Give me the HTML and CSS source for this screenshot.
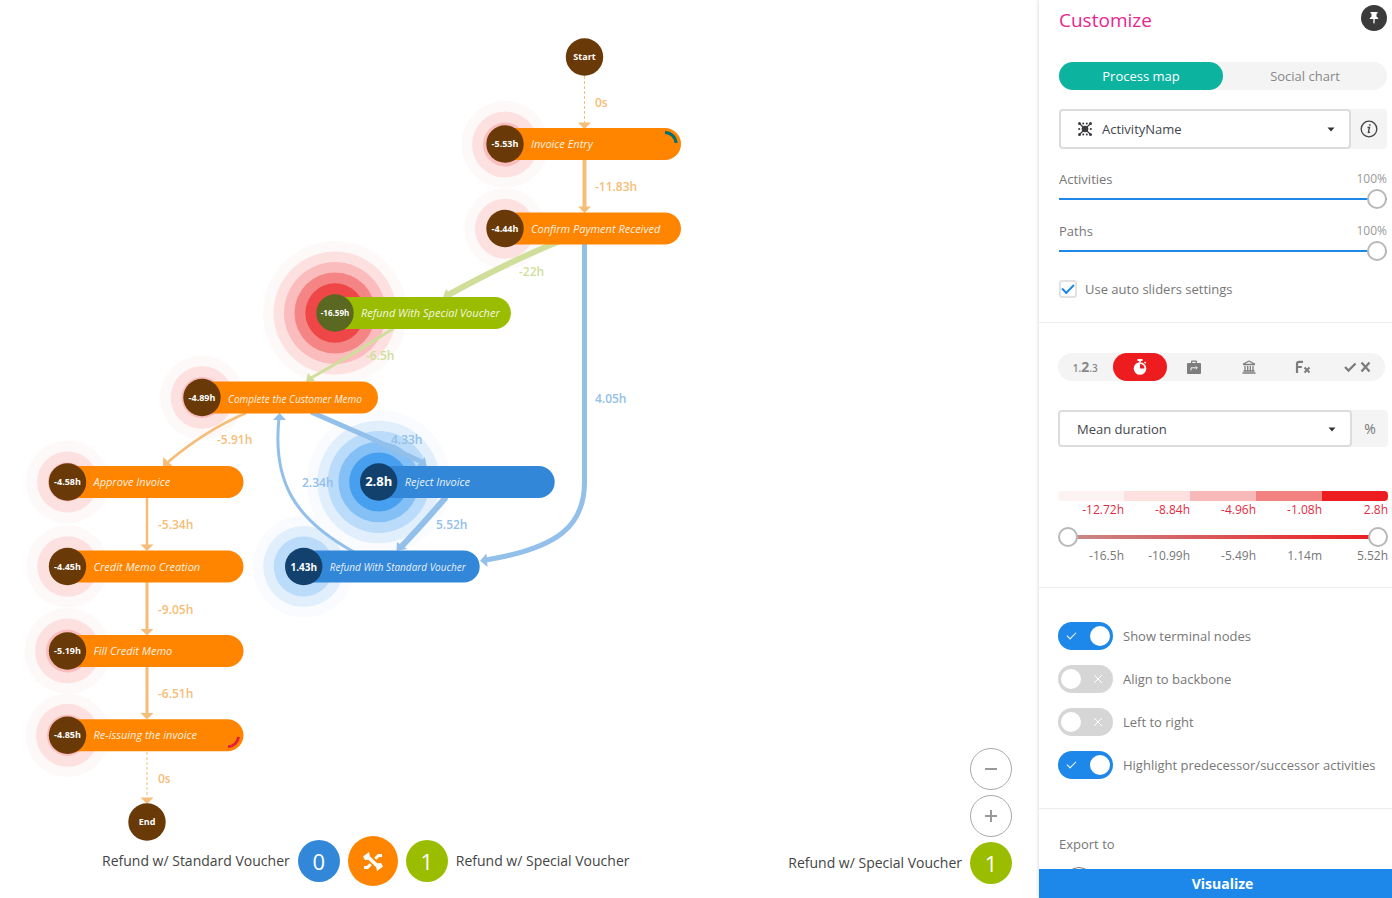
FILE: index.html
```html
<!DOCTYPE html>
<html lang="en">
<head>
<meta charset="utf-8">
<title>Process map</title>
<link rel="stylesheet" href="styles.css">
</head>
<body>
<div class="app">
<main class="stage">
  <svg class="graph" width="700" height="850" viewBox="0 0 700 850" role="img" aria-label="Process map">
    <g class="halos-red">
      <circle class="h1" cx="505" cy="144.5" r="43.5"/><circle class="h2" cx="505" cy="144.5" r="33"/><circle class="h3" cx="505" cy="144.5" r="22"/>
      <circle class="h1" cx="505" cy="228.7" r="40.5"/><circle class="h2" cx="505" cy="228.7" r="30"/>
      <circle class="h1" cx="335" cy="313" r="72"/><circle class="h2" cx="335" cy="313" r="61.5"/><circle class="h3" cx="335" cy="313" r="51"/><circle class="h4" cx="335" cy="313" r="40.5"/><circle class="h5" cx="335" cy="313" r="29.7"/>
      <circle class="h1" cx="202" cy="397.5" r="42"/><circle class="h2" cx="202" cy="397.5" r="31.3"/><circle class="h3" cx="202" cy="397.5" r="20.5"/>
      <circle class="h1" cx="67.5" cy="482" r="41.5"/><circle class="h2" cx="67.5" cy="482" r="30.5"/><circle class="h3" cx="67.5" cy="482" r="19.5"/>
      <circle class="h1" cx="67.5" cy="566.5" r="41"/><circle class="h2" cx="67.5" cy="566.5" r="30.3"/>
      <circle class="h1" cx="67.5" cy="651" r="43"/><circle class="h2" cx="67.5" cy="651" r="32.5"/><circle class="h3" cx="67.5" cy="651" r="21.5"/>
      <circle class="h1" cx="67.5" cy="735.3" r="42"/><circle class="h2" cx="67.5" cy="735.3" r="31.5"/><circle class="h3" cx="67.5" cy="735.3" r="20.5"/>
    </g>
    <g class="halos-blue">
      <circle class="h1" cx="378.7" cy="482" r="72"/><circle class="h1" cx="303.7" cy="566.5" r="51"/>
      <circle class="h2" cx="378.7" cy="482" r="61.3"/><circle class="h3" cx="378.7" cy="482" r="51"/><circle class="h4" cx="378.7" cy="482" r="40.3"/><circle class="h5" cx="378.7" cy="482" r="29.5"/>
      <circle class="h2" cx="303.7" cy="566.5" r="40.5"/><circle class="h3" cx="303.7" cy="566.5" r="30"/>
    </g>

    <g class="edge-orange">
      <path class="dashed" d="M584.5 76V123"/><path class="head" d="M578 122.5h13l-6.500 6.500z"/>
      <path class="w4" d="M584.500 160V208"/><path class="head" d="M578 206.500h13l-6.500 6.500z"/>
      <path class="w2" d="M246 413Q206 430 168 462"/><path class="head" d="M163.300 457L163 467L172.500 466z"/>
      <path class="w2" d="M147 497V546"/><path class="head" d="M140.500 544.500h13l-6.500 6.500z"/>
      <path class="w3" d="M147 582V630"/><path class="head" d="M140.500 629h13l-6.500 6.500z"/>
      <path class="w3" d="M147 667V715"/><path class="head" d="M140.500 713h13l-6.500 6.500z"/>
      <path class="dashed" d="M147 752V797"/><path class="head" d="M140.500 797.500h13l-6.500 6.500z"/>
    </g>
    <g class="edge-green">
      <path class="w6" d="M560 241Q508 262 448 295"/><path class="head" d="M446 289L442 300L455 300z"/>
      <path class="w3" d="M394 328Q352 355 311 378"/><path class="head" d="M308 373L306 382L315 381z"/>
    </g>
    <g class="edge-blue">
      <path class="w5" d="M584.500 244V482C584.500 526 558 548 486 560"/><path class="head" d="M486.500 553.500L480 560.700L487.500 567z"/>
      <path class="w5" d="M311 412Q368 436 424 463"/><path class="head" d="M425 457L426.500 467L416 467z"/>
      <path class="w6" d="M446 497Q423 524 402 546"/><path class="head" d="M397 542L396.500 551L407 549z"/>
      <path class="w3" d="M354 552C296 520 272 483 279 418"/><path class="head" d="M273 420h13l-6.500 -7z"/>
    </g>
    <g class="edge-label">
      <text class="t-orange" x="595" y="107">0s</text>
      <text class="t-orange" x="595" y="191">-11.83h</text>
      <text class="t-green" x="519" y="276">-22h</text>
      <text class="t-green" x="366" y="360">-6.5h</text>
      <text class="t-blue" x="595" y="403">4.05h</text>
      <text class="t-orange" x="217" y="444">-5.91h</text>
      <text class="t-blue" x="391" y="444">4.33h</text>
      <text class="t-blue" x="302" y="487">2.34h</text>
      <text class="t-blue" x="436" y="529">5.52h</text>
      <text class="t-orange" x="158" y="529">-5.34h</text>
      <text class="t-orange" x="158" y="614">-9.05h</text>
      <text class="t-orange" x="158" y="698">-6.51h</text>
      <text class="t-orange" x="158" y="783">0s</text>
    </g>

    <g class="node orange" transform="translate(505 144)"><rect x="-16" y="-16" width="192" height="32" rx="16"/><circle r="18.700"/><text class="name" x="26" y="4">Invoice Entry</text><text class="value" y="3">-5.53h</text><path class="arc-start" d="M160 -11.500A11 11 0 0 1 171 -1"/></g>
    <g class="node orange" transform="translate(505 228.500)"><rect x="-16" y="-16" width="192" height="32" rx="16"/><circle r="18.700"/><text class="name" x="26" y="4">Confirm Payment Received</text><text class="value" y="3">-4.44h</text></g>
    <g class="node green" transform="translate(335 313)"><rect x="-16" y="-16" width="192" height="32" rx="16"/><circle r="18.700"/><text class="name" x="26" y="4">Refund With Special Voucher</text><text class="value small" y="3">-16.59h</text></g>
    <g class="node orange" transform="translate(202 397.500)"><rect x="-16" y="-16" width="192" height="32" rx="16"/><circle r="18.700"/><text class="name tight" x="26" y="5">Complete the Customer Memo</text><text class="value" y="3">-4.89h</text></g>
    <g class="node blue" transform="translate(378.700 482)"><rect x="-16" y="-16" width="192" height="32" rx="16"/><circle r="18.700"/><text class="name" x="26" y="4">Reject Invoice</text><text class="value big" y="4">2.8h</text></g>
    <g class="node blue" transform="translate(303.700 566.500)"><rect x="-16" y="-16" width="192" height="32" rx="16"/><circle r="18.700"/><text class="name tight" x="26" y="4">Refund With Standard Voucher</text><text class="value mid" y="4">1.43h</text></g>
    <g class="node orange" transform="translate(67.500 482)"><rect x="-16" y="-16" width="192" height="32" rx="16"/><circle r="18.700"/><text class="name" x="26" y="4">Approve Invoice</text><text class="value" y="3">-4.58h</text></g>
    <g class="node orange" transform="translate(67.500 566.500)"><rect x="-16" y="-16" width="192" height="32" rx="16"/><circle r="18.700"/><text class="name" x="26" y="4">Credit Memo Creation</text><text class="value" y="3">-4.45h</text></g>
    <g class="node orange" transform="translate(67.500 651)"><rect x="-16" y="-16" width="192" height="32" rx="16"/><circle r="18.700"/><text class="name" x="26" y="4">Fill Credit Memo</text><text class="value" y="3">-5.19h</text></g>
    <g class="node orange" transform="translate(67.500 735.300)"><rect x="-16" y="-16" width="192" height="32" rx="16"/><circle r="18.700"/><text class="name" x="26" y="4">Re-issuing the invoice</text><text class="value" y="3">-4.85h</text><path class="arc-end" d="M171 1.500A11 11 0 0 1 160.500 11.500"/></g>
    <g class="node orange" transform="translate(584.500 57)"><circle r="18.700"/><text class="value" y="3">Start</text></g>
    <g class="node orange" transform="translate(147 822)"><circle r="18.700"/><text class="value" y="3">End</text></g>
  </svg>

  <div class="overlay">
    <div class="legend">
      <span>Refund w/ Standard Voucher</span>
      <button class="bubble bubble-blue" type="button">0</button>
      <button class="bubble bubble-swap" type="button" aria-label="Compare">
        <svg width="20" height="19" viewBox="0 0 20 19" fill="none" stroke="#fff" stroke-width="3"><path stroke-width="3.600" d="M4 4L16 15.500"/><path d="M19 3.500H15.500L12.300 6.800M1 15.500H4.500L7.700 12.200"/><path fill="#fff" stroke="none" d="M0 4.500L6 0l1.500 7.500L2 8zM20 14.500L14 19l-1.500-7.500L18 11z"/></svg>
      </button>
      <button class="bubble bubble-green" type="button">1</button>
      <span>Refund w/ Special Voucher</span>
    </div>
    <div class="zoom">
      <button class="round" type="button" aria-label="Zoom out"><svg width="14" height="14" viewBox="0 0 14 14"><path d="M1 7h12"/></svg></button>
      <button class="round" type="button" aria-label="Zoom in"><svg width="14" height="14" viewBox="0 0 14 14"><path d="M1 7h12M7 1v12"/></svg></button>
      <div class="legend"><span>Refund w/ Special Voucher</span><button class="bubble bubble-green" type="button">1</button></div>
    </div>
  </div>
</main>

<aside class="panel">
  <div class="panel-body">
    <section class="block block-top">
      <header class="panel-head">
        <h1>Customize</h1>
        <button class="pin" type="button" aria-label="Pin panel"><svg width="10" height="14" viewBox="0 0 10 14" fill="#fff"><path d="M1.500 1h7v1.500h-1v3.300C8.800 6.300 9.300 7 9.300 8H.7c0-1 .5-1.700 1.800-2.200V2.500h-1zM4.300 8h1.400v3.500L5 13l-.7-1.500z"/></svg></button>
      </header>
      <div class="tabs">
        <button class="tab tab-on" type="button">Process map</button>
        <button class="tab" type="button">Social chart</button>
      </div>
      <div class="field">
        <div class="select">
          <svg class="select-icon" width="14" height="14" viewBox="0 0 14 14" fill="#3a3a40"><path d="M2 2l10 10M12 2L2 12" stroke="#3a3a40" stroke-width="1.200"/><circle cx="7" cy="7" r="3.300"/><circle cx="1.500" cy="1.500" r="1.500"/><circle cx="12.500" cy="1.500" r="1.500"/><circle cx="1.500" cy="12.500" r="1.500"/><circle cx="12.500" cy="12.500" r="1.500"/><circle cx="5.200" cy="1.500" r="1"/><circle cx="8.800" cy="1.500" r="1"/><circle cx="5.200" cy="12.500" r="1"/><circle cx="8.800" cy="12.500" r="1"/><circle cx="1.200" cy="7" r="1.100"/><circle cx="12.800" cy="7" r="1.100"/></svg>
          <select class="with-icon" aria-label="Attribute"><option>ActivityName</option></select>
          <svg class="caret" width="8" height="5" viewBox="0 0 8 5"><path d="M.5.500h7L4 4.500z"/></svg>
        </div>
        <button class="addon" type="button" aria-label="Information"><svg width="18" height="18" viewBox="0 0 18 18" fill="none" stroke="#444" stroke-width="1.300"><circle cx="9" cy="9" r="7.800"/><path d="M7.500 7.500h2L8.300 12.300q.6.500 1.800-.4" /><circle cx="9.800" cy="5" r=".6" fill="#444" stroke-width=".6"/></svg></button>
      </div>
      <div class="slider">
        <label for="activities">Activities</label><output for="activities">100%</output>
        <input id="activities" type="range" min="0" max="100" value="100">
      </div>
      <div class="slider">
        <label for="paths">Paths</label><output for="paths">100%</output>
        <input id="paths" type="range" min="0" max="100" value="100">
      </div>
      <label class="check"><input type="checkbox" checked>Use auto sliders settings</label>
    </section>

    <section class="block block-metric">
      <div class="icons">
        <button class="metric num" type="button" aria-label="Frequency"><small>1.</small>2<small>.3</small></button>
        <button class="metric metric-on" type="button" aria-label="Duration"><svg width="14" height="16" viewBox="0 0 14 16"><path fill="#fff" d="M4.500 0h5v2h-1.500v1.300h-2V2H4.500zM11 3.500l1.200-1 1 1.200-1.100 1z"/><circle cx="7" cy="9.500" r="6.300" fill="#fff"/><path d="M7 9.500V5A4.500 4.500 0 0 1 11.500 9.500z" fill="#ed1c1f"/></svg></button>
        <button class="metric" type="button" aria-label="Resources"><svg width="16" height="15" viewBox="0 0 16 15"><path fill="#7d7d7d" fill-rule="evenodd" d="M5 3V1.500Q5 .5 6 .5h4q1 0 1 1V3h3q1 0 1 1v9q0 1-1 1H2q-1 0-1-1V4q0-1 1-1zM6.300 3h3.400V1.800H6.300z"/><path d="M5 10.500V7.800h6M9.800 6.300l1.500 1.500-1.500 1.500" fill="none" stroke="#f4f4f4" stroke-width="1"/></svg></button>
        <button class="metric" type="button" aria-label="Cost"><svg width="14" height="14" viewBox="0 0 14 14" fill="none" stroke="#7d7d7d" stroke-width="1.300"><path d="M1 4.500h12M7 1L1 4.200M7 1l6 3.200M3 6v4.500M5.700 6v4.500M8.300 6v4.500M11 6v4.500M1.500 11h11M.5 13h13"/></svg></button>
        <button class="metric" type="button" aria-label="Formula"><svg width="16" height="14" viewBox="0 0 16 14" fill="none" stroke="#7d7d7d"><path stroke-width="2.200" d="M2 13V4Q2 1.800 4.200 1.800H8M2 7h4.800"/><path stroke-width="2" d="M9.500 7.500l5 5M14.500 7.500l-5 5"/></svg></button>
        <button class="metric" type="button" aria-label="Conformance"><svg width="27" height="12" viewBox="0 0 27 12" fill="none" stroke="#7d7d7d" stroke-width="2.300"><path d="M1 6l3.500 3.500L11.500 2.500M17.500 1.500l8 9M25.500 1.500l-8 9"/></svg></button>
      </div>
      <div class="field">
        <div class="select">
          <select aria-label="Measure"><option>Mean duration</option></select>
          <svg class="caret" width="8" height="5" viewBox="0 0 8 5"><path d="M.5.500h7L4 4.500z"/></svg>
        </div>
        <button class="addon" type="button">%</button>
      </div>
      <div class="scale">
        <div class="scale-bar"><i class="s1"></i><i class="s2"></i><i class="s3"></i><i class="s4"></i><i class="s5"></i></div>
        <div class="ticks ticks-red"><span>-12.72h</span><span>-8.84h</span><span>-4.96h</span><span>-1.08h</span><span>2.8h</span></div>
        <div class="range2">
          <input type="range" min="0" max="100" value="0" aria-label="Minimum">
          <input type="range" min="0" max="100" value="100" aria-label="Maximum">
        </div>
        <div class="ticks"><span>-16.5h</span><span>-10.99h</span><span>-5.49h</span><span>1.14m</span><span>5.52h</span></div>
      </div>
    </section>

    <section class="block block-switches">
      <label class="switch"><input type="checkbox" checked>Show terminal nodes</label>
      <label class="switch"><input type="checkbox">Align to backbone</label>
      <label class="switch"><input type="checkbox">Left to right</label>
      <label class="switch"><input type="checkbox" checked>Highlight predecessor/successor activities</label>
    </section>

    <section class="block block-export">
      <p>Export to</p>
      <button class="export" type="button" aria-label="Export file"></button>
    </section>
  </div>
  <button class="visualize" type="button">Visualize</button>
</aside>
</div>
</body>
</html>
```
FILE: styles.css
```css
* { box-sizing: border-box; }
body { margin: 0; background: #fff; color: #777; font: 14px/20px "Open Sans", "Noto Sans", sans-serif; }
button, select, input { font: inherit; color: inherit; margin: 0; }
button { border: 0; padding: 0; background: none; cursor: pointer; }
.app { display: grid; grid-template-columns: 1fr 353px; height: 100vh; overflow: hidden; }

/* Process graph */
.stage { display: grid; min-width: 0; min-height: 0; overflow: hidden; }
.graph, .overlay { grid-area: 1 / 1; }
.graph { display: block; }
.halos-red .h1 { fill: #fef9f9; }
.halos-red .h2 { fill: #fde1e1; }
.halos-red .h3 { fill: #fabcbc; }
.halos-red .h4 { fill: #f58484; }
.halos-red .h5 { fill: #ef4747; }
.halos-blue .h1 { fill: #f9fbff; }
.halos-blue .h2 { fill: #e1effd; }
.halos-blue .h3 { fill: #badbfa; }
.halos-blue .h4 { fill: #84bff5; }
.halos-blue .h5 { fill: #479fef; }
.edge-orange path, .edge-green path, .edge-blue path { fill: none; }
.edge-orange { stroke: #f5bd78; }
.edge-green { stroke: #cfdf9b; }
.edge-blue { stroke: #93c0ea; }
.graph .head { stroke: none; }
.edge-orange .head { fill: #f5bd78; }
.edge-green .head { fill: #cfdf9b; }
.edge-blue .head { fill: #93c0ea; }
.w2 { stroke-width: 2.5px; }
.w3 { stroke-width: 3px; }
.w4 { stroke-width: 4px; }
.w5 { stroke-width: 5px; }
.w6 { stroke-width: 6px; }
.dashed { stroke-width: 1px; stroke-dasharray: 3 2; }
.edge-label { font-size: 12px; font-weight: 600; }
.t-orange { fill: #f5bd78; }
.t-green { fill: #cfdf9b; }
.t-blue { fill: #93c0ea; }
.orange rect { fill: #ff8500; }
.orange circle { fill: #693907; }
.green rect { fill: #9bbd00; }
.green circle { fill: #5b6821; }
.blue rect { fill: #3287d8; }
.blue circle { fill: #12416d; }
.name { fill: #fff; fill-opacity: .9; font-size: 11px; font-style: italic; }
.name.tight { font-size: 10px; }
.value { fill: #fff; font-size: 9px; font-weight: 700; text-anchor: middle; }
.value.small { font-size: 8px; }
.value.mid { font-size: 10px; }
.value.big { font-size: 13px; }
.arc-start, .arc-end { fill: none; stroke-width: 3px; }
.arc-start { stroke: #006f73; }
.arc-end { stroke: #e22039; }

/* Floating legend and zoom */
.overlay { align-self: end; display: flex; justify-content: space-between; align-items: flex-end; padding: 0 27px 12px 102px; color: #444; font-size: 14px; }
.legend { display: flex; align-items: center; gap: 8px; white-space: nowrap; }
.bubble { width: 42px; height: 42px; border-radius: 50%; color: #fff; font-size: 22px; line-height: 42px; }
.bubble-blue { background: #3287d8; }
.bubble-green { background: #9bbd00; }
.bubble-swap { display: grid; place-items: center; width: 50px; height: 50px; background: #ff8500; }
.zoom { display: flex; flex-direction: column; align-items: flex-end; gap: 5px; padding-bottom: 2px; }
.round { display: grid; place-items: center; width: 42px; height: 42px; border: 1px solid #aaa; border-radius: 50%; background: #fff; }
.round path { stroke: #999; stroke-width: 2px; }

/* Side panel */
.panel { display: flex; flex-direction: column; min-height: 0; background: #fff; box-shadow: 0 0 4px rgba(0, 0, 0, .2); }
.panel-body { flex: 1; min-height: 0; overflow: hidden; }
.block { padding: 0 5px 0 20px; border-bottom: 1px solid #ededed; }
.block-top { padding-top: 5px; padding-bottom: 23px; }
.panel-head { display: flex; justify-content: space-between; align-items: flex-start; height: 57px; }
.panel-head h1 { margin: 0; color: #e9268f; font-size: 19px; font-weight: 400; line-height: 30px; }
.pin { display: grid; place-items: center; width: 26px; height: 26px; border-radius: 50%; background: #3b3b3b; }
.tabs, .icons { display: flex; border-radius: 14px; background: #f4f4f4; }
.tab { flex: 1; height: 28px; border-radius: 14px; color: #888; font-size: 13px; }
.tab-on { background: #0cb39f; color: #fff; }
.field { display: flex; border-radius: 4px; background: #f4f4f4; }
.block-top .field { margin: 19px 0 20px; }
.select { position: relative; flex: 1; }
.select select { appearance: none; display: block; width: 100%; height: 40px; padding: 0 30px 0 17px; border: 2px solid #dcdcdc; border-radius: 4px; background: #fff; color: #42464d; font-size: 13px; }
.select .with-icon { padding-left: 41px; }
.select-icon { position: absolute; left: 19px; top: 13px; }
.caret { position: absolute; right: 16px; top: 50%; margin-top: -2px; fill: #333; }
.addon { display: grid; place-items: center; width: 36px; color: #777; }
.slider { display: grid; grid-template-columns: 1fr auto; margin-bottom: 12px; font-size: 13px; }
.slider output { color: #999; font-size: 12px; }
.slider input { grid-column: 1 / 3; }
input[type="range"] { appearance: none; display: block; width: 100%; height: 20px; background: linear-gradient(#1e88ea, #1e88ea) center / 100% 2px no-repeat; }
input[type="range"]::-webkit-slider-thumb { appearance: none; width: 20px; height: 20px; border: 2px solid #b8b8b8; border-radius: 50%; background: #fff; pointer-events: auto; }
.check { display: flex; align-items: center; gap: 8px; margin-top: 18px; font-size: 13px; }
.check input { appearance: none; display: grid; place-items: center; width: 18px; height: 18px; border: 2px solid #e2e2e2; border-radius: 3px; }
.check input:checked::before { content: ""; width: 10px; height: 5px; margin-top: -3px; border: solid #1e88ea; border-width: 0 0 2px 2px; transform: rotate(-45deg); }

.block-metric { padding: 30px 4px 22px 19px; }
.icons { margin-right: 3px; }
.metric { flex: 1; display: grid; place-items: center; height: 28px; border-radius: 14px; color: #888; font-weight: 700; }
.metric.num { display: block; }
.metric small { font-size: 10px; font-weight: 600; }
.metric-on { background: #ed1c1f; }
.block-metric .field { margin-top: 29px; }
.block-metric .select select { height: 37px; }
.scale { margin-top: 44px; }
.scale-bar { display: flex; height: 10px; border-radius: 4px; overflow: hidden; }
.scale-bar i { flex: 1; }
.s1 { background: #fef3f3; }
.s2 { background: #fde1e1; }
.s3 { background: #f9b8b8; }
.s4 { background: #f28282; }
.s5 { background: #ed1c1f; }
.ticks { display: grid; grid-template-columns: repeat(5, 1fr); font-size: 12px; line-height: 18px; text-align: right; }
.ticks-red { color: #df2b42; }
.range2 { display: grid; margin: 8px 0 0; background: linear-gradient(90deg, #c98a8a, #ed1c1f) center / 94% 4px no-repeat; }
.range2 input[type="range"] { grid-area: 1 / 1; background: none; pointer-events: none; }

.block-switches { display: grid; gap: 15px; padding: 34px 5px 29px 19px; }
.switch { display: flex; align-items: center; gap: 10px; height: 28px; font-size: 13px; white-space: nowrap; }
.switch input { appearance: none; display: flex; flex-direction: row-reverse; align-items: center; justify-content: flex-end; gap: 13px; flex: none; width: 55px; height: 28px; padding: 0 3px; border-radius: 14px; background: #d6d6d6; }
.switch input::before { content: ""; width: 8px; height: 8px; background: linear-gradient(45deg, transparent 44%, #fff 44%, #fff 56%, transparent 56%), linear-gradient(-45deg, transparent 44%, #fff 44%, #fff 56%, transparent 56%); }
.switch input::after { content: ""; width: 20px; height: 20px; border-radius: 50%; background: #fff; }
.switch input:checked { flex-direction: row; gap: 14px; background: #1e88ea; }
.switch input:checked::before { width: 8px; height: 4px; margin-bottom: 3px; border: solid #fff; border-width: 0 0 1px 1px; background: none; transform: rotate(-45deg); }

.block-export { padding-top: 25px; border-bottom: 0; font-size: 13px; }
.block-export p { margin: 0 0 13px; }
.export { display: block; width: 30px; height: 30px; margin-left: 5px; border: 1px solid #777; border-radius: 50%; }
.visualize { flex: none; height: 29px; padding-left: 14px; background: #1e88ea; color: #fff; font-weight: 700; }
```
